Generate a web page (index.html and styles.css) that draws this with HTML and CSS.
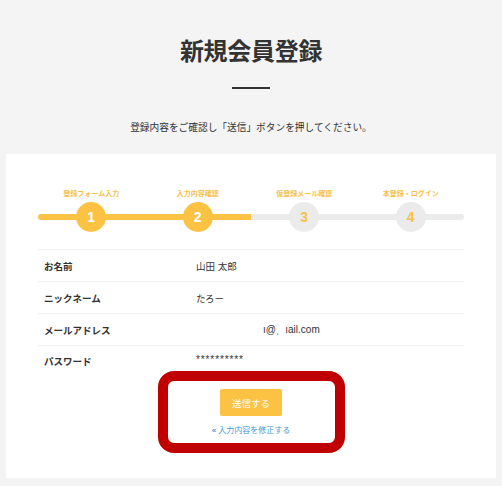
FILE: index.html
```html
<!DOCTYPE html>
<html lang="ja">
<head>
<meta charset="utf-8">
<title>新規会員登録</title>
<link rel="stylesheet" href="styles.css">
</head>
<body>
<header class="page-head">
  <h1 class="page-title">新規会員登録</h1>
  <div class="title-rule"></div>
  <p class="lead">登録内容をご確認し「送信」ボタンを押してください。</p>
</header>
<main class="card">
  <div class="steps">
    <div class="step-labels">
      <span class="step-label">登録フォーム入力</span>
      <span class="step-label">入力内容確認</span>
      <span class="step-label">仮登録メール確認</span>
      <span class="step-label">本登録・ログイン</span>
    </div>
    <div class="step-track">
      <span class="step-dot done">1</span>
      <span class="step-dot done">2</span>
      <span class="step-dot">3</span>
      <span class="step-dot">4</span>
    </div>
  </div>
  <dl class="confirm">
    <div class="row"><dt>お名前</dt><dd>山田 太郎</dd></div>
    <div class="row"><dt>ニックネーム</dt><dd>たろー</dd></div>
    <div class="row"><dt>メールアドレス</dt><dd><span class="mail">ı@ˌ<span class="gap"></span>ıail.com</span></dd></div>
    <div class="row last"><dt>パスワード</dt><dd class="pw">**********</dd></div>
  </dl>
  <div class="actions">
    <button class="submit" type="button">送信する</button>
    <a class="back" href="#"><b>«</b> 入力内容を修正する</a>
  </div>
</main>
</body>
</html>
```

FILE: styles.css
```css
* { box-sizing: border-box; margin: 0; padding: 0; }
html, body { background: #f4f4f4; }
body {
  font-family: "Liberation Sans", "Noto Sans CJK JP", sans-serif;
  color: #333;
  height: 486px;
  overflow: hidden;
}
.page-head {
  display: flex;
  flex-direction: column;
  align-items: center;
  padding-top: 33px;
}
.page-title {
  font-family: "Noto Sans CJK JP", sans-serif;
  font-size: 24px;
  line-height: 34px;
  font-weight: 700;
  color: #333;
  letter-spacing: -0.3px;
}
.title-rule {
  width: 38px;
  height: 2px;
  background: #333;
  margin-top: 20px;
}
.lead {
  font-size: 9.7px;
  line-height: 14px;
  margin-top: 32px;
  color: #333;
}
.card {
  background: #fff;
  margin: 19px 6px 0;
  padding: 35px 32px 25px;
  height: 324px;
}
.steps {
  padding-bottom: 17px;
}
.step-labels,
.step-track {
  display: grid;
  grid-template-columns: repeat(4, 1fr);
  justify-items: center;
}
.step-label {
  font-size: 7px;
  line-height: 10px;
  font-weight: 700;
  color: #f7bf4a;
}
.step-track {
  position: relative;
  margin-top: 3px;
  height: 30px;
  align-items: center;
}
.step-track::before {
  content: "";
  position: absolute;
  left: 0;
  right: 0;
  top: 12px;
  height: 6px;
  border-radius: 3px;
  background: linear-gradient(to right, #fcc244 0, #fcc244 50%, #ebebeb 50%, #ebebeb 100%);
}
.step-dot {
  position: relative;
  width: 30px;
  height: 30px;
  border-radius: 50%;
  background: #ebebeb;
  color: #f9c04a;
  display: flex;
  align-items: center;
  justify-content: center;
  font-family: "Liberation Sans", Arial, sans-serif;
  font-weight: 700;
  font-size: 14px;
}
.step-dot.done {
  background: #fcc244;
  color: #fff;
}
.confirm {
  border-top: 1px solid #efefef;
}
.row {
  display: flex;
  align-items: center;
  height: 32px;
  border-bottom: 1px solid #efefef;
  font-size: 9.5px;
}
.row.last {
  border-bottom: none;
  height: 25px;
  align-items: flex-start;
  padding-top: 8px;
}
.row dt {
  width: 158px;
  padding-left: 6px;
  font-weight: 700;
  color: #333;
}
.row dd {
  color: #333;
}
.row dd.pw {
  font-size: 10px;
  letter-spacing: 0.9px;
}
.mail {
  margin-left: 67px;
  font-size: 10px;
}
.gap {
  display: inline-block;
  width: 6px;
}
.actions {
  width: 187px;
  margin: 0 auto;
  border: 10px solid #c00000;
  border-radius: 16px;
  display: flex;
  flex-direction: column;
  align-items: center;
  padding: 8px 0 6px;
  height: 82px;
}
.submit {
  width: 62px;
  height: 29px;
  border: none;
  border-radius: 2px;
  background: #fcc244;
  color: #fff;
  font-family: "Noto Sans CJK JP", sans-serif;
  font-size: 9.5px;
}
.back {
  margin-top: 9px;
  font-size: 8px;
  line-height: 12px;
  color: #3c9ad8;
  text-decoration: none;
}
```
